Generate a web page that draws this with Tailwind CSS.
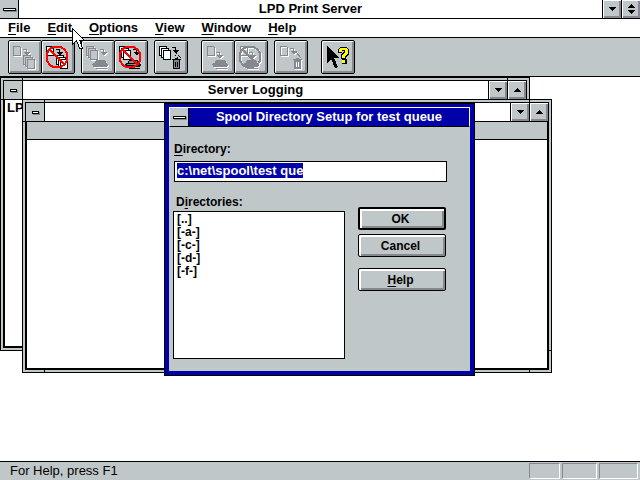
<!DOCTYPE html>
<html lang="en">
<head>
  <meta charset="UTF-8" />
  <meta name="viewport" content="width=device-width, initial-scale=1.0" />
  <title>LPD Print Server</title>
  <script src="https://cdn.jsdelivr.net/npm/@tailwindcss/browser@4"></script>
</head>
<body class="relative flex min-h-screen flex-col overflow-hidden bg-white font-['Liberation_Sans',Arial,sans-serif] text-[13px] font-bold text-black">

  <!-- shared icon parts -->
  <svg class="hidden">
    <symbol id="page" viewBox="0 0 32 32"><path d="M.5.5h6l1 1v8h-7z" /></symbol>
    <symbol id="pages" viewBox="0 0 32 32"><path d="M.5.5h7v9h-7z" /><path d="M2.5 2.5h7v9h-7z" /><path d="M4.5 4.5h7v9h-7z" /></symbol>
    <symbol id="hop" viewBox="0 0 32 32"><path d="M0 1.5h3.500v3" fill="none" /><path d="M1 4h6v1H6v1H5v1H3V6H2V5H1z" fill="currentColor" stroke="none" /></symbol>
    <symbol id="printer" viewBox="0 0 32 32"><path d="M4 1h9v1h1v2h1v3H1V4h2V2h1z" fill="currentColor" stroke="none" /><path d="M0 5.500h2M1 7.500h13l2-2M4 9.500h11" fill="none" /></symbol>
    <symbol id="trash" viewBox="0 0 32 32"><path d="M0 1.500h9M3 .5h3M1.500 2v8.500h6V2" /><path d="M3.500 4v5M5.500 4v5" /></symbol>
    <symbol id="bin" viewBox="0 0 32 32"><path d="M3 0h3v1h3v1H8v9H1V2H0V1h3z" fill="currentColor" stroke="none" /><path d="M3.500 4v5M5.500 4v5" stroke="#fff" /></symbol>
    <symbol id="up" viewBox="0 0 7 4"><path d="M3 0h1v1h1v1h1v1h1v1H0V3h1V2h1V1h1z" /></symbol>
    <symbol id="down" viewBox="0 0 7 4"><path d="M0 0h7v1H6v1H5v1H4v1H3V3H2V2H1V1H0z" /></symbol>
  </svg>

  <header class="flex h-[19px] border-b border-black text-center leading-[18px]">
    <button aria-label="System menu" class="flex w-[19px] items-center justify-center border-r border-black bg-[#c0c7c8]">
      <span class="h-[3px] w-[13px] border border-black bg-white shadow-[1px_1px_0_#87888f]"></span>
    </button>
    <h1 class="flex-1">LPD Print Server</h1>
    <button aria-label="Minimize" class="flex w-[19px] items-center justify-center border-l border-black bg-[#c0c7c8] shadow-[inset_1px_1px_0_#fff,inset_-2px_-2px_0_#87888f]">
      <svg class="h-1 w-[7px]" shape-rendering="crispEdges"><use href="#down" /></svg>
    </button>
    <button aria-label="Restore" class="flex w-[19px] flex-col items-center justify-center gap-0.5 border-l border-black bg-[#c0c7c8] shadow-[inset_1px_1px_0_#fff,inset_-2px_-2px_0_#87888f]">
      <svg class="h-1 w-[7px]" shape-rendering="crispEdges"><use href="#up" /></svg>
      <svg class="h-1 w-[7px]" shape-rendering="crispEdges"><use href="#down" /></svg>
    </button>
  </header>

  <nav class="flex h-[19px] gap-[17px] border-b border-black px-2 leading-[18px]">
    <a href="#"><u class="underline-offset-2">F</u>ile</a>
    <a href="#"><u class="underline-offset-2">E</u>dit</a>
    <a href="#"><u class="underline-offset-2">O</u>ptions</a>
    <a href="#"><u class="underline-offset-2">V</u>iew</a>
    <a href="#"><u class="underline-offset-2">W</u>indow</a>
    <a href="#"><u class="underline-offset-2">H</u>elp</a>
  </nav>

  <div class="flex h-[39px] gap-1.5 border-b border-black bg-[#c0c7c8] px-2 pt-0.5" role="toolbar">
    <div class="flex -space-x-px">
      <button disabled aria-label="Copy job" class="size-[34px] rounded-[2px] border border-black shadow-[inset_1px_1px_0_#fff,inset_-2px_-2px_0_#87888f]">
        <svg class="size-8" viewBox="0 0 32 32" shape-rendering="crispEdges" fill="none">
          <g class="text-white" stroke="currentColor"><use href="#page" x="5" y="6" width="32" height="32" /><use href="#hop" x="15" y="8" width="32" height="32" /><use href="#pages" x="15" y="15" width="32" height="32" /></g>
          <g class="text-[#87888f]" stroke="currentColor" fill="#c0c7c8"><use href="#page" x="4" y="5" width="32" height="32" /><use href="#hop" x="14" y="7" width="32" height="32" /><use href="#pages" x="14" y="14" width="32" height="32" /></g>
        </svg>
      </button>
      <button aria-label="Cancel copy" class="size-[34px] rounded-[2px] border border-black shadow-[inset_1px_1px_0_#fff,inset_-2px_-2px_0_#87888f]">
        <svg class="size-8" viewBox="0 0 32 32" shape-rendering="crispEdges" fill="#fff" stroke="#000">
          <use href="#page" x="4" y="5" width="32" height="32" /><use href="#hop" x="14" y="7" width="32" height="32" /><use href="#pages" x="14" y="14" width="32" height="32" />
          <g fill="none" stroke="#f00" stroke-width="2"><circle cx="15" cy="16" r="10.500" /><path d="M8 9l14 14" /></g>
        </svg>
      </button>
    </div>
    <div class="flex -space-x-px">
      <button disabled aria-label="Print jobs" class="size-[34px] rounded-[2px] border border-black shadow-[inset_1px_1px_0_#fff,inset_-2px_-2px_0_#87888f]">
        <svg class="size-8" viewBox="0 0 32 32" shape-rendering="crispEdges" fill="none">
          <g class="text-white" stroke="currentColor"><use href="#pages" x="5" y="6" width="32" height="32" /><use href="#hop" x="19" y="8" width="32" height="32" /><use href="#printer" x="11" y="19" width="32" height="32" /></g>
          <g class="text-[#87888f]" stroke="currentColor" fill="#c0c7c8"><use href="#pages" x="4" y="5" width="32" height="32" /><use href="#hop" x="18" y="7" width="32" height="32" /><use href="#printer" x="10" y="18" width="32" height="32" /></g>
        </svg>
      </button>
      <button aria-label="Stop printing" class="size-[34px] rounded-[2px] border border-black shadow-[inset_1px_1px_0_#fff,inset_-2px_-2px_0_#87888f]">
        <svg class="size-8" viewBox="0 0 32 32" shape-rendering="crispEdges" fill="#fff" stroke="#000">
          <use href="#pages" x="4" y="5" width="32" height="32" /><use href="#hop" x="18" y="7" width="32" height="32" />
          <use href="#printer" x="10" y="18" width="32" height="32" />
          <path d="M14 20h8v2h-8zM12 23h11v1H12z" fill="#87888f" stroke="none" />
          <g fill="none" stroke="#f00" stroke-width="2"><circle cx="15" cy="16" r="10.500" /><path d="M8 9l14 14" /></g>
        </svg>
      </button>
    </div>
    <button aria-label="Delete jobs" class="size-[34px] rounded-[2px] border border-black shadow-[inset_1px_1px_0_#fff,inset_-2px_-2px_0_#87888f]">
      <svg class="size-8" viewBox="0 0 32 32" shape-rendering="crispEdges" fill="#fff" stroke="#000">
        <use href="#pages" x="4" y="5" width="32" height="32" /><use href="#hop" x="17" y="5" width="32" height="32" />
        <path d="M21 12l5 5M20 14l3 3" stroke-dasharray="2 1" />
        <g fill="#87888f"><use href="#trash" x="17" y="17" width="32" height="32" /></g>
      </svg>
    </button>
    <div class="ml-[7px] flex -space-x-px">
      <button disabled aria-label="Print page" class="size-[34px] rounded-[2px] border border-black shadow-[inset_1px_1px_0_#fff,inset_-2px_-2px_0_#87888f]">
        <svg class="size-8" viewBox="0 0 32 32" shape-rendering="crispEdges" fill="none">
          <g class="text-white" stroke="currentColor"><use href="#page" x="6" y="6" width="32" height="32" /><use href="#hop" x="15" y="11" width="32" height="32" /><use href="#printer" x="11" y="19" width="32" height="32" /></g>
          <g class="text-[#87888f]" stroke="currentColor" fill="#c0c7c8"><use href="#page" x="5" y="5" width="32" height="32" /><use href="#hop" x="14" y="10" width="32" height="32" /><use href="#printer" x="10" y="18" width="32" height="32" /></g>
        </svg>
      </button>
      <button disabled aria-label="Stop page" class="size-[34px] rounded-[2px] border border-black shadow-[inset_1px_1px_0_#fff,inset_-2px_-2px_0_#87888f]">
        <svg class="size-8" viewBox="0 0 32 32" shape-rendering="crispEdges" fill="none">
          <g class="text-white" stroke="currentColor"><circle cx="16" cy="17" r="10.500" stroke-width="2" /><path d="M9 10l8 8" /><use href="#page" x="6" y="6" width="32" height="32" /><use href="#hop" x="15" y="11" width="32" height="32" /><use href="#printer" x="9" y="19" width="32" height="32" /></g>
          <g class="text-[#87888f]" stroke="currentColor"><circle cx="15" cy="16" r="10.500" stroke-width="2" /><path d="M8 9l14 14" stroke-width="2" /><use href="#page" x="5" y="5" width="32" height="32" /><use href="#hop" x="14" y="10" width="32" height="32" /><use href="#printer" x="8" y="18" width="32" height="32" /></g>
        </svg>
      </button>
    </div>
    <button disabled aria-label="Delete page" class="size-[34px] rounded-[2px] border border-black shadow-[inset_1px_1px_0_#fff,inset_-2px_-2px_0_#87888f]">
      <svg class="size-8" viewBox="0 0 32 32" shape-rendering="crispEdges" fill="none">
        <g class="text-white" stroke="currentColor"><use href="#page" x="6" y="6" width="32" height="32" /><use href="#hop" x="16" y="7" width="32" height="32" /><path d="M22 12l4 5" /><use href="#bin" x="19" y="18" width="32" height="32" /></g>
        <g class="text-[#87888f]" stroke="currentColor"><use href="#page" x="5" y="5" width="32" height="32" /><use href="#hop" x="15" y="6" width="32" height="32" /><path d="M21 11l5 6" /><use href="#bin" x="18" y="17" width="32" height="32" /></g>
      </svg>
    </button>
    <button aria-label="Context help" class="ml-[7px] size-[34px] rounded-[2px] border border-black shadow-[inset_1px_1px_0_#fff,inset_-2px_-2px_0_#87888f]">
      <svg class="size-8" viewBox="0 0 32 32" shape-rendering="crispEdges">
        <path d="M5 5l12 12h-5l4 9-3 1-4-9-4 4z" />
        <path d="M16 8h1V7h1V6h7v1h1v1h1v6h-1v1h-1v1h-1v2h1v5h-5v-5h-1v-5h1v-1h1v-1h1v-1h-2v2h-4z" />
        <path d="M17 8h1V7h7v1h1v5h-1v1h-1v1h-1v2h-3v-3h1v-1h1v-1h1V9h-3v2h-3zM20 19h3v3h-3z" fill="#ff0" />
      </svg>
    </button>
  </div>

  <!-- MDI area -->
  <main class="relative flex-1">
    <section class="absolute top-0 left-0 flex h-[274px] w-[530px] flex-col border border-black bg-[#c0c7c8] p-0.5">
      <i class="absolute top-[21px] left-0 h-px w-0.5 bg-black"></i>
      <i class="absolute top-0 left-[21px] h-0.5 w-px bg-black"></i>
      <i class="absolute top-0 right-[21px] h-0.5 w-px bg-black"></i>
      <div class="flex flex-1 flex-col border border-black">
        <div class="flex h-[19px] border-b border-black bg-white text-center leading-[18px]">
          <button aria-label="Log window menu" class="flex w-[19px] items-center justify-center border-r border-black bg-[#c0c7c8]">
            <span class="h-[3px] w-[7px] border border-black bg-white shadow-[1px_1px_0_#87888f]"></span>
          </button>
          <h2 class="flex-1">Server Logging</h2>
          <button aria-label="Minimize log" class="flex w-[19px] items-center justify-center border-l border-black bg-[#c0c7c8] shadow-[inset_1px_1px_0_#fff,inset_-2px_-2px_0_#87888f]">
            <svg class="h-1 w-[7px]" shape-rendering="crispEdges"><use href="#down" /></svg>
          </button>
          <button aria-label="Maximize log" class="flex w-[19px] items-center justify-center border-l border-black bg-[#c0c7c8] shadow-[inset_1px_1px_0_#fff,inset_-2px_-2px_0_#87888f]">
            <svg class="h-1 w-[7px]" shape-rendering="crispEdges"><use href="#up" /></svg>
          </button>
        </div>
        <div class="flex-1 border border-t-0 border-black bg-white px-0.5 leading-4">LP</div>
      </div>
    </section>

    <section class="absolute top-[22px] left-[22px] flex h-[274px] w-[530px] flex-col border border-black bg-[#c0c7c8] p-0.5">
      <i class="absolute top-[21px] left-0 h-px w-0.5 bg-black"></i>
      <i class="absolute top-0 left-[21px] h-0.5 w-px bg-black"></i>
      <i class="absolute top-0 right-[21px] h-0.5 w-px bg-black"></i>
      <i class="absolute bottom-0 left-[21px] h-0.5 w-px bg-black"></i>
      <i class="absolute right-[21px] bottom-0 h-0.5 w-px bg-black"></i>
      <i class="absolute right-0 bottom-[21px] h-px w-0.5 bg-black"></i>
      <div class="flex flex-1 flex-col border border-black">
        <div class="flex h-[19px] border-b border-black bg-white">
          <button aria-label="Queue window menu" class="flex w-[19px] items-center justify-center border-r border-black bg-[#c0c7c8]">
            <span class="h-[3px] w-[7px] border border-black bg-white shadow-[1px_1px_0_#87888f]"></span>
          </button>
          <div class="flex-1"></div>
          <button aria-label="Minimize queue" class="flex w-[19px] items-center justify-center border-l border-black bg-[#c0c7c8] shadow-[inset_1px_1px_0_#fff,inset_-2px_-2px_0_#87888f]">
            <svg class="h-1 w-[7px]" shape-rendering="crispEdges"><use href="#down" /></svg>
          </button>
          <button aria-label="Maximize queue" class="flex w-[19px] items-center justify-center border-l border-black bg-[#c0c7c8] shadow-[inset_1px_1px_0_#fff,inset_-2px_-2px_0_#87888f]">
            <svg class="h-1 w-[7px]" shape-rendering="crispEdges"><use href="#up" /></svg>
          </button>
        </div>
        <div class="h-[18px] border-x border-b border-black"></div>
        <div class="flex-1 border-x border-b border-black bg-white"></div>
      </div>
    </section>

    <form role="dialog" aria-labelledby="dlgTitle" class="absolute top-[26px] left-[164px] w-[311px] border border-black bg-[#0000a8] px-1 pt-[3px] pb-1">
      <div class="flex h-5 border border-white border-b-black leading-[18px] text-white">
        <button type="button" aria-label="Dialog menu" class="flex w-[19px] items-center justify-center border-r border-black bg-[#c0c7c8]">
          <span class="h-[3px] w-[13px] border border-black bg-white shadow-[1px_1px_0_#87888f]"></span>
        </button>
        <h2 id="dlgTitle" class="flex-1 text-center">Spool Directory Setup for test queue</h2>
      </div>
      <div class="h-[244px] bg-[#c0c7c8] pt-4 pr-6 pl-1 text-xs">
        <label for="dir" class="block pl-px leading-[13px]"><u class="underline-offset-2">D</u>irectory:</label>
        <input id="dir" type="text" value="c:\net\spool\test que" autofocus class="mt-[5px] ml-px block h-[21px] w-[273px] border border-black bg-white px-0.5 pb-0.5 text-[13px] outline-none selection:bg-[#0000a8]/99 selection:text-white" />
        <div class="mt-[14px] flex justify-between">
          <div>
            <label for="dirs" class="block pl-[3px] leading-[13px]">D<u class="underline-offset-2">i</u>rectories:</label>
            <select id="dirs" size="10" class="mt-0.5 block h-[148px] w-[172px] overflow-hidden border border-black bg-white p-0 outline-none">
              <option class="h-[13px] min-h-0 px-[3px] py-0 leading-[13px] font-bold">[..]</option>
              <option class="h-[13px] min-h-0 px-[3px] py-0 leading-[13px] font-bold">[-a-]</option>
              <option class="h-[13px] min-h-0 px-[3px] py-0 leading-[13px] font-bold">[-c-]</option>
              <option class="h-[13px] min-h-0 px-[3px] py-0 leading-[13px] font-bold">[-d-]</option>
              <option class="h-[13px] min-h-0 px-[3px] py-0 leading-[13px] font-bold">[-f-]</option>
            </select>
          </div>
          <div class="flex w-[88px] flex-col pt-[11px]">
            <button type="submit" class="h-[23px] rounded-[2px] border-2 border-black pr-[3px] shadow-[inset_2px_2px_0_#fff,inset_-2px_-2px_0_#87888f]">OK</button>
            <button type="button" class="mt-1 h-[23px] rounded-[2px] border border-black pr-[3px] shadow-[inset_2px_2px_0_#fff,inset_-2px_-2px_0_#87888f]">Cancel</button>
            <button type="button" class="mt-[11px] h-[23px] rounded-[2px] border border-black pr-[3px] shadow-[inset_2px_2px_0_#fff,inset_-2px_-2px_0_#87888f]"><u class="underline-offset-2">H</u>elp</button>
          </div>
        </div>
      </div>
    </form>
  </main>

  <footer class="flex h-[19px] gap-0.5 border-t border-black bg-[#c0c7c8] pt-px pr-0.5 pb-px pl-[10px] font-normal leading-4">
    <span class="flex-1">For Help, press F1</span>
    <span class="w-[31px] border border-[#87888f] border-r-white border-b-white"></span>
    <span class="w-[35px] border border-[#87888f] border-r-white border-b-white"></span>
    <span class="w-[39px] border border-[#87888f] border-r-white border-b-white"></span>
  </footer>

  <!-- mouse pointer -->
  <svg class="pointer-events-none absolute top-7 left-[72px] h-[22px] w-[13px]" viewBox="0 0 13 22" shape-rendering="crispEdges">
    <path d="M.5.500v16l4-4 3 7.500h3l-3-8h4.500z" fill="#fff" stroke="#000" />
  </svg>

  <script>
    const dir = document.getElementById("dir");
    dir.focus();
    dir.select();
  </script>
</body>
</html>
